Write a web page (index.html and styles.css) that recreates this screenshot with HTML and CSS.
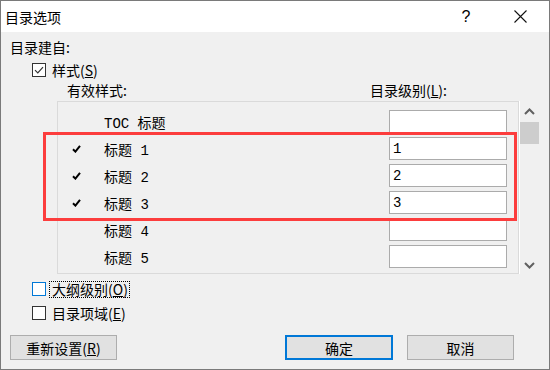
FILE: index.html
```html
<!DOCTYPE html>
<html lang="zh-CN">
<head>
    <meta charset="UTF-8">
    <title>目录选项</title>
    <link rel="stylesheet" href="styles.css">
</head>
<body>
    <div class="window">
        <div class="titlebar">
            <span class="title">目录选项</span>
            <span class="help">?</span>
            <span class="close">
                <svg width="13" height="13" viewBox="0 0 13 13"><path d="M0.5 0.5L12.5 12.5M12.5 0.5L0.5 12.5" stroke="#111" stroke-width="1.1" fill="none"/></svg>
            </span>
        </div>

        <div class="content">
            <div class="row first">目录建自:</div>

            <div class="row check-row">
                <span class="box checked">
                    <svg width="12" height="12" viewBox="0 0 12 12"><path d="M2 6.2L4.8 9L10 3.2" stroke="#333" stroke-width="1.2" fill="none"/></svg>
                </span>
                <span>样式(<u>S</u>)</span>
            </div>

            <div class="row header">
                <span class="col-style">有效样式:</span>
                <span>目录级别(<u>L</u>):</span>
            </div>

            <div class="frame">
                <div class="list">
                    <div class="item">
                        <span class="mark"></span>
                        <span class="name">TOC 标题</span>
                        <input class="level" type="text" value="">
                    </div>
                    <div class="item">
                        <span class="mark"><svg width="9" height="8" viewBox="0 0 9 8"><path d="M1 4.2L3.4 6.6L8 0.8" stroke="#000" stroke-width="2" fill="none"/></svg></span>
                        <span class="name">标题 1</span>
                        <input class="level" type="text" value="1">
                    </div>
                    <div class="item">
                        <span class="mark"><svg width="9" height="8" viewBox="0 0 9 8"><path d="M1 4.2L3.4 6.6L8 0.8" stroke="#000" stroke-width="2" fill="none"/></svg></span>
                        <span class="name">标题 2</span>
                        <input class="level" type="text" value="2">
                    </div>
                    <div class="item">
                        <span class="mark"><svg width="9" height="8" viewBox="0 0 9 8"><path d="M1 4.2L3.4 6.6L8 0.8" stroke="#000" stroke-width="2" fill="none"/></svg></span>
                        <span class="name">标题 3</span>
                        <input class="level" type="text" value="3">
                    </div>
                    <div class="item">
                        <span class="mark"></span>
                        <span class="name">标题 4</span>
                        <input class="level" type="text" value="">
                    </div>
                    <div class="item">
                        <span class="mark"></span>
                        <span class="name">标题 5</span>
                        <input class="level" type="text" value="">
                    </div>
                </div>
                <div class="scrollbar">
                    <div class="arrow up">
                        <svg width="11" height="7" viewBox="0 0 11 7"><path d="M1 6L5.5 1.5L10 6" stroke="#606060" stroke-width="2" fill="none"/></svg>
                    </div>
                    <div class="thumb"></div>
                    <div class="arrow down">
                        <svg width="11" height="7" viewBox="0 0 11 7"><path d="M1 1L5.5 5.5L10 1" stroke="#606060" stroke-width="2" fill="none"/></svg>
                    </div>
                </div>
            </div>

            <div class="row opt outline">
                <span class="box focus"></span>
                <span class="focus-label">大纲级别(<u>O</u>)</span>
            </div>
            <div class="row opt fields">
                <span class="box"></span>
                <span>目录项域(<u>E</u>)</span>
            </div>

            <div class="buttons">
                <button class="btn reset">重新设置(<u>R</u>)</button>
                <button class="btn ok">确定</button>
                <button class="btn cancel">取消</button>
            </div>
        </div>

        <div class="highlight"></div>
    </div>
</body>
</html>
```

FILE: styles.css
```css
body {
    margin: 0;
    background: #f0f0f0;
    font-family: "Noto Sans CJK SC", sans-serif;
    font-size: 14px;
    color: #000;
}
.window {
    position: relative;
    width: 550px;
    height: 370px;
    box-sizing: border-box;
    border: 1px solid #7a7a7a;
    background: #f0f0f0;
}
.titlebar {
    height: 31px;
    background: #fff;
    display: flex;
    align-items: center;
}
.title {
    padding-left: 4px;
    flex: 1;
    font-size: 14px;
}
.help {
    width: 20px;
    text-align: center;
    font-family: "Liberation Sans", sans-serif;
    font-size: 16px;
    margin-right: 38px;
}
.close {
    width: 13px;
    height: 13px;
    margin-right: 22px;
    display: flex;
}
.content {
    padding: 0 9px;
}
.row {
    display: flex;
    align-items: center;
}
.first {
    margin-top: 4px;
    height: 22px;
}
.check-row {
    height: 24px;
    padding-left: 22px;
}
.box {
    width: 14px;
    height: 14px;
    box-sizing: border-box;
    border: 1px solid #333;
    background: #fff;
    margin-right: 6px;
    display: flex;
    align-items: center;
    justify-content: center;
}
.box.focus {
    border-color: #0078d7;
}
.header {
    height: 16px;
}
.col-style {
    margin-left: 57px;
    width: 303px;
}
.frame {
    display: flex;
    margin-top: 3px;
    margin-left: 47px;
    height: 173px;
}
.list {
    width: 462px;
    box-sizing: border-box;
    border: 1px solid #dadada;
    padding: 8px 11px 0 14px;
    overflow: hidden;
}
.item {
    display: flex;
    align-items: center;
    height: 23px;
    margin-bottom: 4px;
}
.mark {
    width: 32px;
    display: flex;
    align-items: center;
}
.name {
    flex: 1;
    font-family: "Liberation Mono", "Noto Sans CJK SC", monospace;
}
.level {
    width: 118px;
    height: 23px;
    box-sizing: border-box;
    border: 1px solid #ababab;
    background: #fff;
    padding: 0 3px;
    font-family: "Liberation Mono", monospace;
    font-size: 14px;
    color: #000;
    outline: none;
}
.scrollbar {
    width: 19px;
    border-left: 1px solid #fff;
    display: flex;
    flex-direction: column;
}
.arrow {
    display: flex;
    align-items: center;
    justify-content: center;
}
.arrow.up {
    height: 21px;
}
.arrow.down {
    height: 18px;
    margin-top: auto;
}
.thumb {
    height: 22px;
    background: #cdcdcd;
}
.opt {
    height: 22px;
    padding-left: 22px;
}
.outline {
    margin-top: 4px;
}
.fields {
    margin-top: 2px;
}
.focus-label {
    border: 1px dotted #000;
    padding: 0 1px 0 2px;
    margin-left: -3px;
    line-height: 15px;
}
.buttons {
    display: flex;
    margin-top: 11px;
    margin-right: 26px;
}
.btn {
    height: 25px;
    width: 107px;
    box-sizing: border-box;
    border: 1px solid #adadad;
    background: #e1e1e1;
    font-family: "Noto Sans CJK SC", sans-serif;
    font-size: 14px;
    color: #000;
    padding: 0;
}
.btn.ok {
    width: 108px;
    margin-left: auto;
    margin-right: 14px;
    border: 2px solid #0078d7;
}
.highlight {
    position: absolute;
    left: 42px;
    top: 131px;
    width: 474px;
    height: 89px;
    box-sizing: border-box;
    border: 3px solid #fc3d3d;
}
```
